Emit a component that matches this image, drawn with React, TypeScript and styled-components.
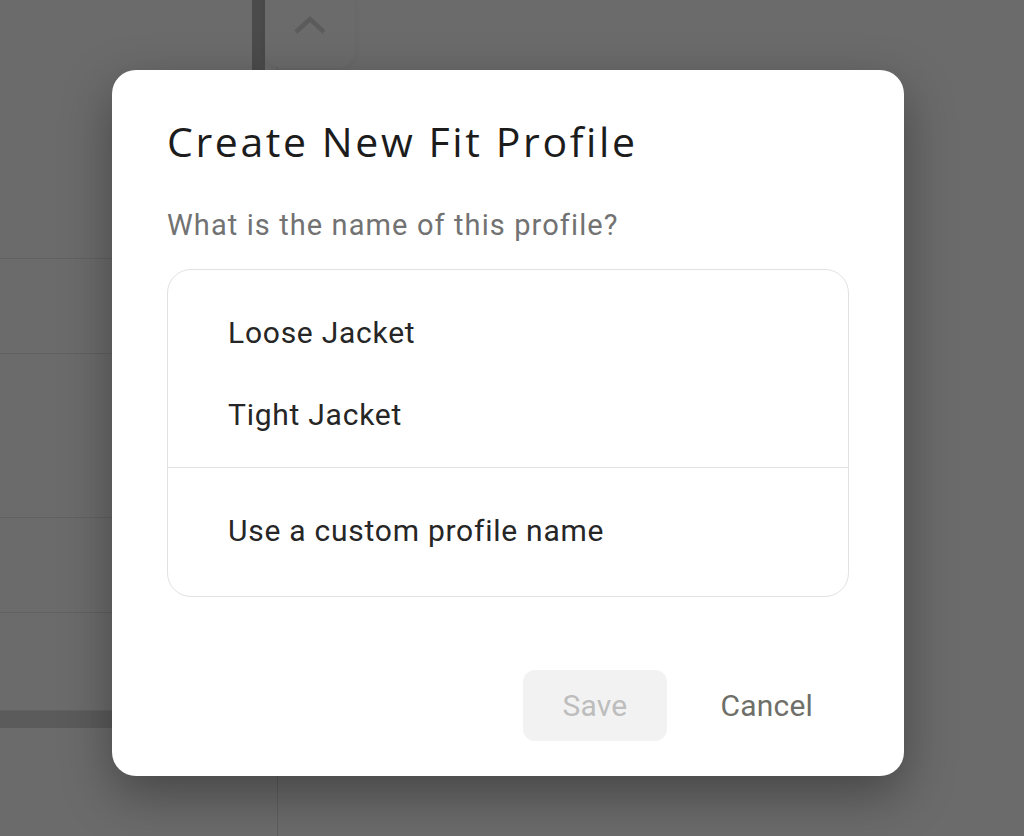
import styled, { createGlobalStyle } from 'styled-components';

const GlobalStyle = createGlobalStyle`
  html, body {
    margin: 0;
    padding: 0;
    height: 100%;
    overflow: hidden;
  }
  body {
    font-family: Roboto, "Liberation Sans", sans-serif;
    background: #fff;
  }
`;

const Page = styled.div`
  position: fixed;
  inset: 0;
  display: flex;
  background: #fff;
`;

const Sidebar = styled.div`
  width: 252px;
  display: flex;
  flex-direction: column;
`;

const SidebarRow = styled.div<{ $height: number }>`
  height: ${(p) => p.$height}px;
  flex-shrink: 0;
  border-bottom: 1px solid #e8e8e8;
`;

const SidebarBar = styled.div`
  height: 17px;
  flex-shrink: 0;
  background: #d8d8d8;
`;

const Track = styled.div`
  width: 13px;
  height: 420px;
  background: #b2b2b2;
`;

const Main = styled.div`
  flex: 1;
  display: grid;
  grid-template-columns: 1fr;
  grid-template-rows: 1fr;
`;

const Column = styled.div`
  grid-area: 1 / 1;
  margin-left: 12px;
  border-left: 1px solid #e0e0e0;
`;

const ScrollCard = styled.div`
  grid-area: 1 / 1;
  align-self: start;
  width: 90px;
  height: 68px;
  display: flex;
  justify-content: center;
  padding-top: 15px;
  box-sizing: border-box;
  background: #fff;
  border-radius: 0 0 16px 16px;
  box-shadow: 0 1px 6px rgba(0, 0, 0, 0.08);
  color: #d8d8d8;
`;

const Overlay = styled.div`
  position: fixed;
  inset: 0;
  background: rgba(0, 0, 0, 0.58);
  padding: 70px 0 0 112px;
`;

const Dialog = styled.div`
  width: 792px;
  box-sizing: border-box;
  padding: 47px 55px 35px;
  background: #fff;
  border-radius: 24px;
  box-shadow: 0 18px 50px rgba(0, 0, 0, 0.35);
`;

const Title = styled.h1`
  margin: 0;
  font-family: "Open Sans", "Liberation Sans", sans-serif;
  font-weight: 400;
  font-size: 41px;
  line-height: 48px;
  letter-spacing: 2.6px;
  color: #1c1c1c;
`;

const Subtitle = styled.p`
  margin: 44px 0 0;
  font-size: 29px;
  line-height: 32px;
  letter-spacing: 1.1px;
  color: #727272;
`;

const OptionBox = styled.div`
  margin-top: 28px;
  border: 1px solid #e2e2e2;
  border-radius: 24px;
`;

const OptionGroup = styled.div<{ $divided?: boolean }>`
  padding: 21px 0 ${(p) => (p.$divided ? 25 : 12)}px;
  border-top: ${(p) => (p.$divided ? '1px solid #e2e2e2' : 'none')};
`;

const Option = styled.div`
  height: 82px;
  display: flex;
  align-items: center;
  padding-left: 60px;
  font-size: 30px;
  letter-spacing: 0.75px;
  color: #262626;
`;

const Actions = styled.div`
  margin-top: 73px;
  display: flex;
  justify-content: flex-end;
  gap: 17px;
`;

const ActionButton = styled.button<{ $variant: 'filled' | 'text' }>`
  height: 71px;
  padding: 0 ${(p) => (p.$variant === 'filled' ? 40 : 36)}px;
  border: none;
  border-radius: 12px;
  font-family: Roboto, "Liberation Sans", sans-serif;
  font-size: 30px;
  letter-spacing: 0.2px;
  background: ${(p) => (p.$variant === 'filled' ? '#f2f2f2' : 'transparent')};
  color: ${(p) => (p.$variant === 'filled' ? '#bdbdbd' : '#6f6f6a')};
  cursor: pointer;
`;

const ChevronUp = () => (
  <svg width="34" height="20" viewBox="0 0 34 20" fill="none">
    <path d="M3 17L17 4L31 17" stroke="currentColor" strokeWidth="4.5" />
  </svg>
);

const App = () => {
  const profiles = ['Loose Jacket', 'Tight Jacket'];

  return (
    <>
      <GlobalStyle />
      <Page>
        <Sidebar>
          <SidebarRow $height={258} />
          <SidebarRow $height={94} />
          <SidebarRow $height={163} />
          <SidebarRow $height={94} />
          <SidebarRow $height={97} />
          <SidebarBar />
        </Sidebar>
        <Track />
        <Main>
          <Column />
          <ScrollCard>
            <ChevronUp />
          </ScrollCard>
        </Main>
      </Page>
      <Overlay>
        <Dialog>
          <Title>Create New Fit Profile</Title>
          <Subtitle>What is the name of this profile?</Subtitle>
          <OptionBox>
            <OptionGroup>
              {profiles.map((name) => (
                <Option key={name}>{name}</Option>
              ))}
            </OptionGroup>
            <OptionGroup $divided>
              <Option>Use a custom profile name</Option>
            </OptionGroup>
          </OptionBox>
          <Actions>
            <ActionButton $variant="filled" disabled>
              Save
            </ActionButton>
            <ActionButton $variant="text">Cancel</ActionButton>
          </Actions>
        </Dialog>
      </Overlay>
    </>
  );
};

export default App;
